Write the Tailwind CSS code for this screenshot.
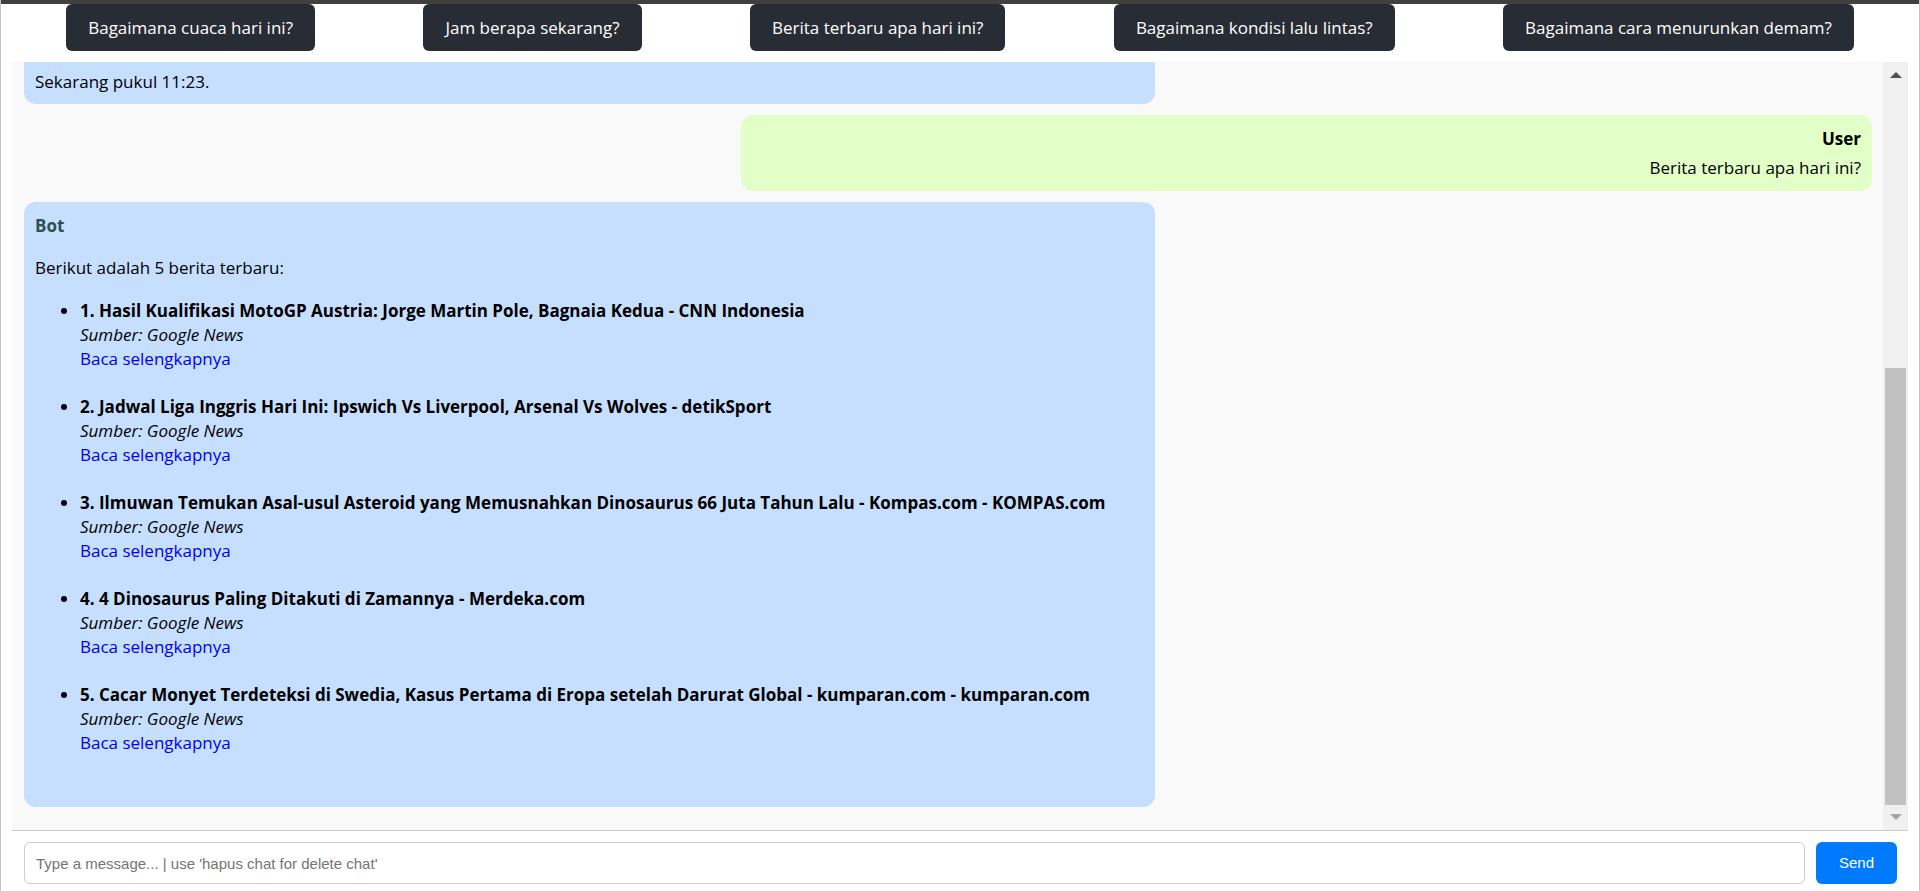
<!DOCTYPE html>
<html lang="id">
<head>
<meta charset="utf-8">
<meta name="viewport" content="width=device-width, initial-scale=1">
<title>Chatbot</title>
<script src="https://cdn.jsdelivr.net/npm/@tailwindcss/browser@4"></script>
</head>
<body class="bg-white text-black font-['Segoe_UI','Open_Sans',sans-serif] text-[17px] leading-6">
<div class="h-screen flex flex-col border-x border-[#c4c4c4] overflow-hidden">
  <div class="h-1 shrink-0 -mx-px bg-[#404040]"></div>

  <nav class="flex justify-around mx-[11px] mb-[11px] shrink-0 text-white leading-[23px]" aria-label="Pertanyaan cepat">
    <button type="button" class="rounded-md bg-[#282c34] px-[22px] py-3">Bagaimana cuaca hari ini?</button>
    <button type="button" class="rounded-md bg-[#282c34] px-[22px] py-3">Jam berapa sekarang?</button>
    <button type="button" class="rounded-md bg-[#282c34] px-[22px] py-3">Berita terbaru apa hari ini?</button>
    <button type="button" class="rounded-md bg-[#282c34] px-[22px] py-3">Bagaimana kondisi lalu lintas?</button>
    <button type="button" class="rounded-md bg-[#282c34] px-[22px] py-3">Bagaimana cara menurunkan demam?</button>
  </nav>

  <main class="flex flex-1 min-h-0 mx-[11px] bg-[#f9f9f9] border-b border-[#ccc]">
    <div class="flex-1 min-w-0 flex flex-col justify-end gap-[11px] pl-3 pr-[11px] pb-[23px] overflow-hidden">
      <section class="box-content w-3/5 shrink-0 self-start rounded-xl bg-[#c6dfff] px-[11px] pt-10 pb-[10px]">
        <p>Sekarang pukul 11:23.</p>
      </section>

      <section class="box-content w-3/5 shrink-0 self-end rounded-xl bg-[#e1ffc7] px-[11px] pt-3 pb-[11px] text-right">
        <h2 class="font-bold mb-[5px]">User</h2>
        <p>Berita terbaru apa hari ini?</p>
      </section>

      <section class="box-content w-3/5 shrink-0 self-start rounded-xl bg-[#c6dfff] px-[11px] pt-3 pb-[52px]">
        <h2 class="font-bold text-[#2f4f4f] mb-[18px]">Bot</h2>
        <p class="mb-[19px]">Berikut adalah 5 berita terbaru:</p>
        <ul class="list-disc pl-[45px] flex flex-col gap-6">
          <li>
            <strong class="block font-bold">1. Hasil Kualifikasi MotoGP Austria: Jorge Martin Pole, Bagnaia Kedua - CNN Indonesia</strong>
            <em class="block">Sumber: Google News</em>
            <a href="#" class="text-[#0000ee]">Baca selengkapnya</a>
          </li>
          <li>
            <strong class="block font-bold">2. Jadwal Liga Inggris Hari Ini: Ipswich Vs Liverpool, Arsenal Vs Wolves - detikSport</strong>
            <em class="block">Sumber: Google News</em>
            <a href="#" class="text-[#0000ee]">Baca selengkapnya</a>
          </li>
          <li>
            <strong class="block font-bold">3. Ilmuwan Temukan Asal-usul Asteroid yang Memusnahkan Dinosaurus 66 Juta Tahun Lalu - Kompas.com - KOMPAS.com</strong>
            <em class="block">Sumber: Google News</em>
            <a href="#" class="text-[#0000ee]">Baca selengkapnya</a>
          </li>
          <li>
            <strong class="block font-bold">4. 4 Dinosaurus Paling Ditakuti di Zamannya - Merdeka.com</strong>
            <em class="block">Sumber: Google News</em>
            <a href="#" class="text-[#0000ee]">Baca selengkapnya</a>
          </li>
          <li>
            <strong class="block font-bold">5. Cacar Monyet Terdeteksi di Swedia, Kasus Pertama di Eropa setelah Darurat Global - kumparan.com - kumparan.com</strong>
            <em class="block">Sumber: Google News</em>
            <a href="#" class="text-[#0000ee]">Baca selengkapnya</a>
          </li>
        </ul>
      </section>
    </div>

    <!-- Scrollbar -->
    <div class="w-[25px] shrink-0 flex flex-col bg-[#f0f0f0]" aria-hidden="true">
      <div class="h-[25px] flex items-center justify-center"><svg width="12" height="6" viewBox="0 0 12 6"><path d="M0 6 6 0l6 6z" fill="#505050"/></svg></div>
      <div class="grow-[281]"></div>
      <div class="grow-[436] mx-[2px] bg-[#c1c1c1]"></div>
      <div class="h-[25px] flex items-start pt-[9px] justify-center"><svg width="12" height="6" viewBox="0 0 12 6"><path d="M0 0h12L6 6z" fill="#a3a3a3"/></svg></div>
    </div>
  </main>

  <form class="flex gap-[11px] shrink-0 mx-[11px] pl-3 pr-[11px] pt-[11px] pb-[7px] font-['Liberation_Sans',Arial,sans-serif] text-[15px] leading-[18px]">
    <input type="text" aria-label="Message" placeholder="Type a message... | use 'hapus chat for delete chat'" class="flex-1 min-w-0 rounded-md border border-[#ccc] bg-white px-[11px] py-[11px] h-[42px] placeholder:text-[#757575]">
    <button type="button" class="rounded-md bg-[#007bff] text-white px-[23px] py-3">Send</button>
  </form>
</div>
</body>
</html>
